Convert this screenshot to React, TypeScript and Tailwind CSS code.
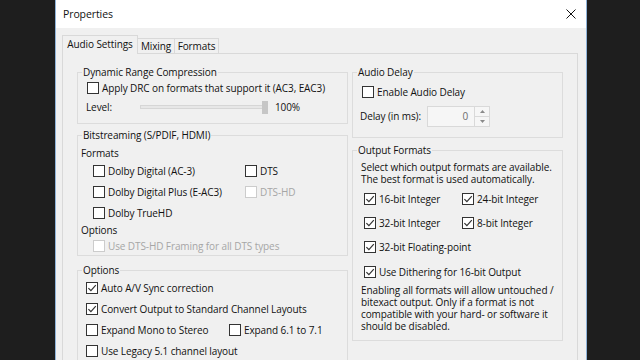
import React from "react";

function Check({ checked = false, disabled = false }: { checked?: boolean; disabled?: boolean }) {
  return (
    <span
      className={`flex h-[12px] w-[12px] shrink-0 items-center justify-center border bg-white ${
        disabled ? "border-[#cccccc]" : "border-[#333333]"
      }`}
    >
      {checked && (
        <svg width="10" height="10" viewBox="0 0 10 10">
          <path d="M1.4 5.1 L3.9 7.7 L8.8 2.1" fill="none" stroke="#333333" strokeWidth="1.2" />
        </svg>
      )}
    </span>
  );
}

function CheckRow({
  label,
  checked = false,
  disabled = false,
  className = "",
}: {
  label: string;
  checked?: boolean;
  disabled?: boolean;
  className?: string;
}) {
  return (
    <div className={`flex items-center gap-[3px] whitespace-nowrap ${className}`}>
      <Check checked={checked} disabled={disabled} />
      <span className={disabled ? "text-[#a6a6a6]" : ""}>{label}</span>
    </div>
  );
}

function Group({
  title,
  className = "",
  children,
}: {
  title: string;
  className?: string;
  children: React.ReactNode;
}) {
  return (
    <fieldset className={`border border-[#dcdcdc] ${className}`}>
      <legend className="ml-[4px] px-[1px] leading-[12px]">{title}</legend>
      {children}
    </fieldset>
  );
}

export default function App() {
  return (
    <div className="flex h-[360px] w-[640px] overflow-hidden bg-[#1e1e1e] font-['Open_Sans','Noto_Sans',sans-serif] text-[10px] leading-[12px] tracking-[-0.1px] text-[#111111]">
      <div className="ml-[55px] flex h-[360px] w-[532px] flex-col overflow-hidden border-x border-[#8fb3d9] bg-[#f0f0f0]">
        {/* Title bar */}
        <div className="flex h-[28px] shrink-0 items-center justify-between bg-white pl-[7px] pr-[10px]">
          <span className="text-[10.5px]">Properties</span>
          <svg width="10" height="10" viewBox="0 0 10 10">
            <path d="M0.5 0.5 L9.5 9.5 M9.5 0.5 L0.5 9.5" stroke="#111111" strokeWidth="1" />
          </svg>
        </div>

        <div className="flex flex-1 flex-col pl-[6px] pr-[8px] pt-[7px]">
          {/* Tabs */}
          <div className="flex items-end">
            <div className="relative z-10 -mb-px flex h-[19px] w-[76px] items-center justify-center border border-b-0 border-[#d9d9d9] bg-[#f0f0f0] pb-[2px]">
              Audio Settings
            </div>
            <div className="flex h-[15px] w-[37px] items-center justify-center border border-b-0 border-l-0 border-[#d9d9d9]">
              Mixing
            </div>
            <div className="flex h-[15px] w-[44px] items-center justify-center border border-b-0 border-l-0 border-[#d9d9d9]">
              Formats
            </div>
          </div>

          {/* Panel */}
          <div className="flex flex-1 gap-[4px] border border-[#d9d9d9] bg-[#f0f0f0] pl-[14px] pt-[12px]">
            {/* Left column */}
            <div className="flex w-[271px] shrink-0 flex-col">
              <Group title="Dynamic Range Compression">
                <div className="pb-[7px] pl-[9px]">
                  <CheckRow className="h-[20px]" label="Apply DRC on formats that support it (AC3, EAC3)" />
                  <div className="flex h-[18px] items-center">
                    <span className="-ml-px w-[54px]">Level:</span>
                    <div className="relative flex h-[13px] w-[128px] items-center">
                      <div className="h-[4px] w-full border border-[#d6d6d6] bg-[#e7e7e7]" />
                      <div className="absolute right-0 top-0 h-[13px] w-[6px] bg-[#c6c6c6]" />
                    </div>
                    <span className="ml-[7px]">100%</span>
                  </div>
                </div>
              </Group>

              <Group title="Bitstreaming (S/PDIF, HDMI)" className="mt-[5px]">
                <div className="pl-[3px]">
                  <div className="mt-[5px] flex h-[14px] items-center">Formats</div>
                  <div className="ml-[12px] grid grid-cols-[152px_1fr]">
                    <CheckRow className="h-[21px]" label="Dolby Digital (AC-3)" />
                    <CheckRow className="h-[21px]" label="DTS" />
                    <CheckRow className="h-[21px]" label="Dolby Digital Plus (E-AC3)" />
                    <CheckRow className="h-[21px]" label="DTS-HD" disabled />
                    <CheckRow className="h-[21px]" label="Dolby TrueHD" />
                  </div>
                  <div className="flex h-[14px] items-center">Options</div>
                  <CheckRow className="ml-[12px] h-[18px]" label="Use DTS-HD Framing for all DTS types" disabled />
                </div>
              </Group>

              <Group title="Options" className="mt-[8px]">
                <div className="pl-[8px] pt-[1px]">
                  <CheckRow className="h-[21px]" label="Auto A/V Sync correction" checked />
                  <CheckRow className="h-[21px]" label="Convert Output to Standard Channel Layouts" checked />
                  <div className="grid grid-cols-[143px_1fr]">
                    <CheckRow className="h-[21px]" label="Expand Mono to Stereo" />
                    <CheckRow className="h-[21px]" label="Expand 6.1 to 7.1" />
                  </div>
                  <CheckRow className="h-[21px]" label="Use Legacy 5.1 channel layout" />
                </div>
              </Group>
            </div>

            {/* Right column */}
            <div className="flex w-[211px] shrink-0 flex-col">
              <Group title="Audio Delay">
                <div className="pb-[9px] pl-[7px] pt-[4px]">
                  <CheckRow className="ml-[2px] h-[20px]" label="Enable Audio Delay" />
                  <div className="mt-[2px] flex h-[24px] items-center">
                    <span className="w-[67px]">Delay (in ms):</span>
                    <div className="flex h-[21px] w-[63px] border border-[#d9d9d9] bg-[#f6f6f6]">
                      <div className="flex flex-1 items-center justify-end pr-[6px] text-[#6d6d6d]">0</div>
                      <div className="flex w-[15px] flex-col border-l border-[#d9d9d9]">
                        <div className="flex flex-1 items-center justify-center border-b border-[#d9d9d9]">
                          <svg width="5" height="3" viewBox="0 0 5 3">
                            <path d="M0 3 L2.5 0 L5 3 Z" fill="#8a8a8a" />
                          </svg>
                        </div>
                        <div className="flex flex-1 items-center justify-center">
                          <svg width="5" height="3" viewBox="0 0 5 3">
                            <path d="M0 0 L2.5 3 L5 0 Z" fill="#8a8a8a" />
                          </svg>
                        </div>
                      </div>
                    </div>
                  </div>
                </div>
              </Group>

              <Group title="Output Formats" className="mt-[6px]">
                <div className="pb-[8px] pl-[8px] pt-[5px]">
                  <p className="whitespace-nowrap">
                    Select which output formats are available.
                    <br />
                    The best format is used automatically.
                  </p>
                  <div className="ml-[3px] mt-[2px] grid grid-cols-[98px_1fr]">
                    <CheckRow className="h-[24px]" label="16-bit Integer" checked />
                    <CheckRow className="h-[24px]" label="24-bit Integer" checked />
                    <CheckRow className="h-[24px]" label="32-bit Integer" checked />
                    <CheckRow className="h-[24px]" label="8-bit Integer" checked />
                    <CheckRow className="col-span-2 h-[23px]" label="32-bit Floating-point" checked />
                  </div>
                  <CheckRow className="ml-[3px] mt-[2px] h-[24px]" label="Use Dithering for 16-bit Output" checked />
                  <p className="whitespace-nowrap">
                    Enabling all formats will allow untouched /
                    <br />
                    bitexact output. Only if a format is not
                    <br />
                    compatible with your hard- or software it
                    <br />
                    should be disabled.
                  </p>
                </div>
              </Group>
            </div>
          </div>
        </div>
      </div>
    </div>
  );
}
